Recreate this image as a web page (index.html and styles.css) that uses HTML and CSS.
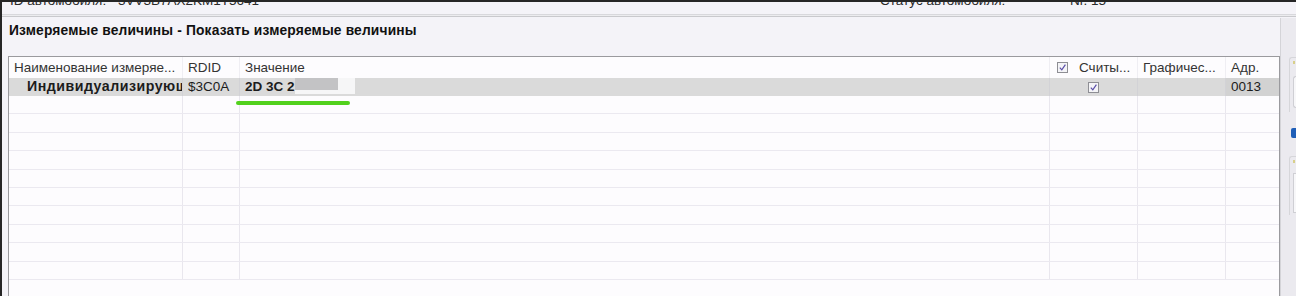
FILE: index.html
```html
<!DOCTYPE html>
<html lang="ru">
<head>
<meta charset="utf-8">
<link rel="stylesheet" href="styles.css">
</head>
<body>
<div class="app">
  <div class="topbar">
    <div class="topbar-text">
      <span class="tb-label">ID автомобиля:</span><span class="tb-value">3VV3B7AX2KM1T5641</span>
      <span class="tb-label2">Статус автомобиля:</span><span class="tb-value2">Nr. 15</span>
    </div>
  </div>
  <div class="body">
    <div class="main">
      <div class="title">Измеряемые величины - Показать измеряемые величины</div>
      <div class="grid">
        <div class="row head">
          <div class="c c1">Наименование измеряе...</div>
          <div class="c c2">RDID</div>
          <div class="c c3">Значение</div>
          <div class="c c4"><span class="cb"><svg viewBox="0 0 9 9" width="9" height="9"><path d="M1.8 4.6 L3.8 6.8 L7.4 1.6" fill="none" stroke="#5a4ea8" stroke-width="1.2"/></svg></span><span class="c4t">Считы...</span></div>
          <div class="c c5">Графичес...</div>
          <div class="c c6">Адр.</div>
        </div>
        <div class="row sel">
          <div class="c c1 b wide">Индивидуализирующ</div>
          <div class="c c2">$3C0A</div>
          <div class="c c3 b">2D 3C 2<span class="redact"><span class="redact-in"></span></span></div>
          <div class="c c4 center"><span class="cb"><svg viewBox="0 0 9 9" width="9" height="9"><path d="M1.8 4.6 L3.8 6.8 L7.4 1.6" fill="none" stroke="#5a4ea8" stroke-width="1.2"/></svg></span></div>
          <div class="c c5"></div>
          <div class="c c6 addr">0013</div>
        </div>
        <div class="row"><div class="c c1"></div><div class="c c2"></div><div class="c c3"></div><div class="c c4"></div><div class="c c5"></div><div class="c c6"></div></div>
        <div class="row"><div class="c c1"></div><div class="c c2"></div><div class="c c3"></div><div class="c c4"></div><div class="c c5"></div><div class="c c6"></div></div>
        <div class="row"><div class="c c1"></div><div class="c c2"></div><div class="c c3"></div><div class="c c4"></div><div class="c c5"></div><div class="c c6"></div></div>
        <div class="row"><div class="c c1"></div><div class="c c2"></div><div class="c c3"></div><div class="c c4"></div><div class="c c5"></div><div class="c c6"></div></div>
        <div class="row"><div class="c c1"></div><div class="c c2"></div><div class="c c3"></div><div class="c c4"></div><div class="c c5"></div><div class="c c6"></div></div>
        <div class="row"><div class="c c1"></div><div class="c c2"></div><div class="c c3"></div><div class="c c4"></div><div class="c c5"></div><div class="c c6"></div></div>
        <div class="row"><div class="c c1"></div><div class="c c2"></div><div class="c c3"></div><div class="c c4"></div><div class="c c5"></div><div class="c c6"></div></div>
        <div class="row"><div class="c c1"></div><div class="c c2"></div><div class="c c3"></div><div class="c c4"></div><div class="c c5"></div><div class="c c6"></div></div>
        <div class="row"><div class="c c1"></div><div class="c c2"></div><div class="c c3"></div><div class="c c4"></div><div class="c c5"></div><div class="c c6"></div></div>
        <div class="row"><div class="c c1"></div><div class="c c2"></div><div class="c c3"></div><div class="c c4"></div><div class="c c5"></div><div class="c c6"></div></div>
        <div class="mark"></div>
      </div>
    </div>
    <div class="side">
      <div class="side-box1"><span class="side-dot"></span><div class="side-input"></div></div>
      <div class="side-check"></div>
      <div class="side-box2"><span class="side-dot"></span><div class="side-input2"></div></div>
    </div>
  </div>
</div>
</body>
</html>
```

FILE: styles.css
```css
html, body {
  margin: 0;
  padding: 0;
  background: #262626;
  height: 296px;
  overflow: hidden;
}
.app {
  margin: 2px 0 0 2px;
  height: 294px;
  background: #f4f3f8;
  font-family: "Liberation Sans", Arial, sans-serif;
  color: #1c1c1c;
  display: flex;
  flex-direction: column;
}
.topbar {
  height: 12px;
  overflow: hidden;
  border-bottom: 1px solid #d8d8dc;
  box-shadow: 0 1px 0 #ececef, 0 2px 0 #c9c9cd;
  flex: none;
}
.topbar-text {
  margin-top: -8px;
  font-size: 13.5px;
  line-height: 14px;
  white-space: nowrap;
  padding-left: 8px;
  display: flex;
  color: #2a2a2a;
}
.tb-label { width: 108px; }
.tb-value { width: 762px; }
.tb-label2 { width: 190px; }
.body {
  flex: 1;
  display: flex;
  margin-top: 3px;
  min-height: 0;
}
.main {
  width: 1278px;
  padding-left: 6px;
  box-sizing: border-box;
  display: flex;
  flex-direction: column;
}
.title {
  font-weight: bold;
  font-size: 13.8px;
  line-height: 16px;
  padding: 5px 0 0 1px;
  height: 22px;
  color: #111;
  letter-spacing: 0.15px;
}
.grid {
  margin-top: 11px;
  border: 1px solid #9a9a9e;
  border-bottom: none;
  background: #fdfcfe;
  flex: 1;
  position: relative;
  overflow: hidden;
}
.row {
  display: flex;
  height: 18.4px;
  border-bottom: 1px solid #ebe9f0;
  box-sizing: border-box;
  font-size: 13.5px;
  line-height: 17px;
}
.row.head {
  height: 21px;
  border-bottom: none;
  line-height: 21px;
  color: #333;
}
.row.sel {
  height: 18px;
  background: #dadada;
  border-bottom: none;
}
.c {
  box-sizing: border-box;
  border-right: 1px solid #e9e7ee;
  padding-left: 5px;
  white-space: nowrap;
  overflow: hidden;
  flex: none;
}
.c1 { width: 174px; }
.c2 { width: 57px; }
.c3 { width: 810px; }
.c4 { width: 88px; display: flex; align-items: center; }
.c5 { width: 88px; }
.c6 { width: 53px; border-right: none; }
.head .c { border-right-color: #efeef3; }
.sel .c { border-right-color: #d2d2d6; }
.c1.b { padding-left: 18px; }
.wide { font-size: 14.2px; letter-spacing: 0.5px; }
.b { font-weight: bold; }
.head .c4 { padding-left: 7px; }
.c4t { margin-left: 11px; }
.c4.center { justify-content: center; padding-left: 0; }
.addr { background: #d2d2d2; }
.cb {
  display: inline-flex;
  width: 9px;
  height: 9px;
  border: 1px solid #8e8e94;
  background: #f4f4f7;
  align-items: center;
  justify-content: center;
}
.cb svg { display: block; }
.redact {
  display: inline-block;
  vertical-align: top;
  width: 60px;
  height: 19px;
  margin-top: -3px;
  background: #f6f6f7;
}
.redact-in {
  display: block;
  width: 43px;
  height: 15px;
  background: #c3c3c5;
}
.mark {
  position: absolute;
  left: 227px;
  top: 44px;
  width: 114px;
  height: 4px;
  border-radius: 2px;
  background: #52d11d;
}
.side {
  flex: 1;
  background: #ebeaef;
  border-left: 1px solid #d4d4d8;
  display: flex;
  flex-direction: column;
  padding-left: 8px;
}
.side-box1 {
  margin-top: 39px;
  height: 54px;
  border-left: 1px solid #d6d6da;
  border-top: 1px solid #d6d6da;
  border-radius: 3px 0 0 0;
  padding-left: 3px;
}
.side-dot {
  display: block;
  width: 2px;
  height: 3px;
  margin-top: 3px;
  background: #d8cf8a;
}
.side-input {
  margin-top: 12px;
  height: 30px;
  border: 1px solid #cfcfd4;
  border-right: none;
  border-radius: 3px 0 0 3px;
  background: #f7f7f9;
}
.side-check {
  margin-top: 16px;
  margin-left: 2px;
  height: 10px;
  background: #1f5fb8;
  border-radius: 2px 0 0 2px;
}
.side-box2 {
  margin-top: 18px;
  height: 58px;
  border-left: 1px solid #d6d6da;
  border-top: 1px solid #d6d6da;
  border-radius: 3px 0 0 0;
  padding-left: 3px;
}
.side-input2 {
  margin-top: 10px;
  height: 38px;
  border: 1px solid #cfcfd4;
  border-right: none;
  background: #f7f7f9;
}
```
